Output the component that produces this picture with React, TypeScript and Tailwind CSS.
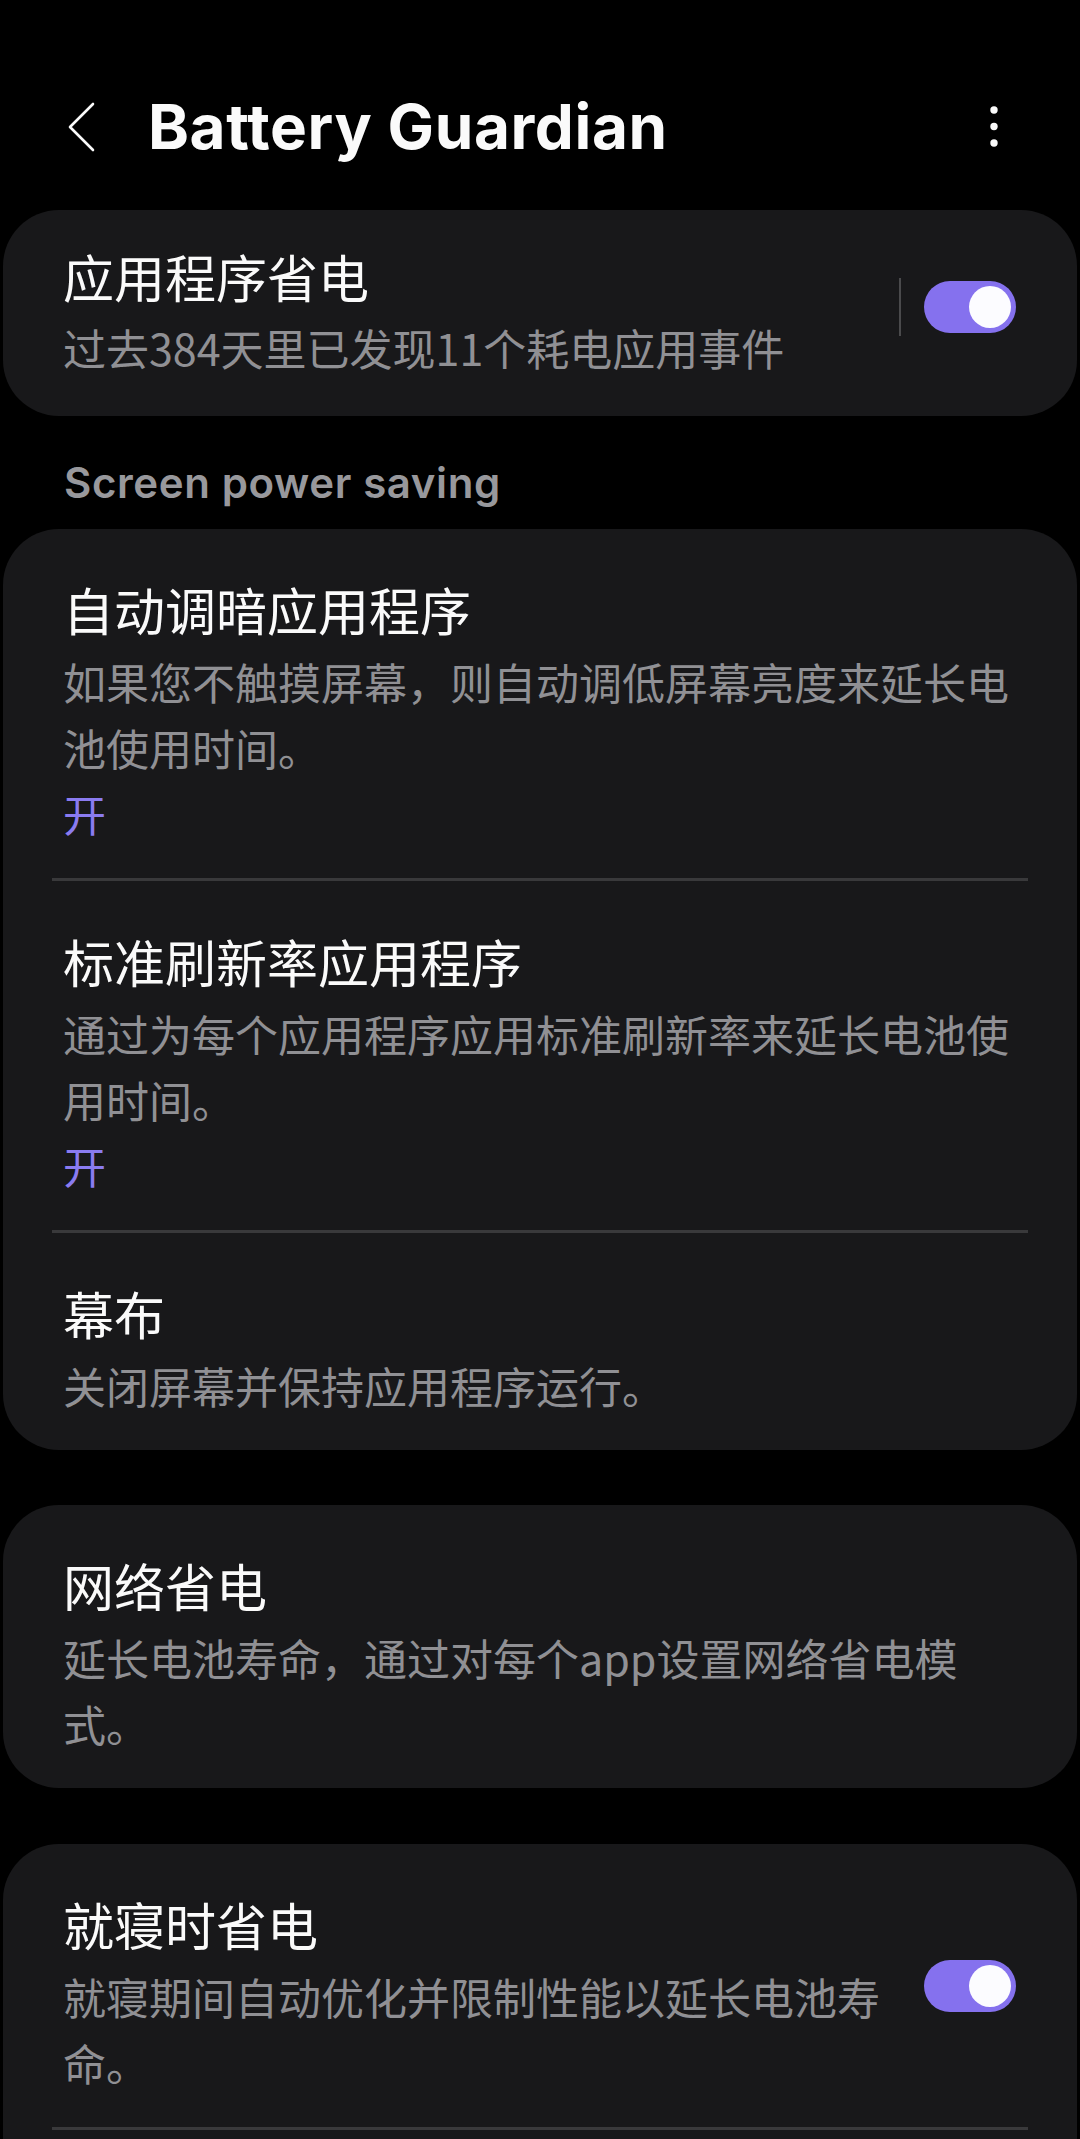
import React from "react";

const CJK = { fontFamily: '"Noto Sans CJK SC", "Noto Sans", sans-serif' };

function Toggle() {
  return (
    <div className="flex h-[52px] w-[92px] shrink-0 items-center justify-end rounded-full bg-[#8571ee] pr-[5px]">
      <div className="h-[42px] w-[42px] rounded-full bg-[#fcfcff]" />
    </div>
  );
}

function Item({ title, sub, on }: { title: string; sub: string; on?: boolean }) {
  return (
    <div className="pl-[60px] pr-[60px] pt-[47px] pb-[32px]">
      <div className="text-[51px] leading-[66px] text-[#fafafa]">{title}</div>
      <div className="mt-[6px] text-[43px] leading-[66px] text-[#909094]">{sub}</div>
      {on && <div className="text-[43px] leading-[66px] text-[#8a7bf0]">开</div>}
    </div>
  );
}

function Divider() {
  return <div className="mx-[49px] h-[3px] bg-[#39393b]" />;
}

export default function App() {
  return (
    <div className="h-[2139px] w-[1080px] overflow-hidden bg-black" style={CJK}>
      {/* Header */}
      <div className="flex h-[210px] items-center pt-[44px]">
        <svg width="30" height="50" viewBox="0 0 30 50" className="ml-[67px]">
          <polyline points="26,2 3,25 26,48" fill="none" stroke="#fafafa" strokeWidth="2.6" strokeLinecap="round" strokeLinejoin="round" />
        </svg>
        <div
          className="ml-[51px] text-[62px] font-bold leading-[80px] tracking-[0.6px] text-[#fafafa]"
          style={{ fontFamily: 'Inter, "Noto Sans", sans-serif' }}
        >
          Battery Guardian
        </div>
        <div className="flex-1" />
        <svg width="14" height="48" viewBox="0 0 14 48" className="mr-[79px]">
          <circle cx="7" cy="7" r="3.7" fill="#fafafa" />
          <circle cx="7" cy="23.5" r="3.7" fill="#fafafa" />
          <circle cx="7" cy="40" r="3.7" fill="#fafafa" />
        </svg>
      </div>

      <div className="flex flex-col px-[3px]">
        {/* Card 1 */}
        <div className="flex items-center rounded-[56px] bg-[#18181a] pl-[60px] pr-[61px]">
          <div className="flex-1 pt-[33px] pb-[36px]">
            <div className="text-[51px] leading-[66px] text-[#fafafa]">应用程序省电</div>
            <div className="mt-[5px] text-[43px] leading-[66px] text-[#909094]">过去384天里已发现11个耗电应用事件</div>
          </div>
          <div className="mb-[12px] flex items-center">
            <div className="h-[58px] w-[2px] bg-[#4a4a4c]" />
            <div className="ml-[23px]">
              <Toggle />
            </div>
          </div>
        </div>

        {/* Section header */}
        <div
          className="mt-[42px] mb-[21px] pl-[61px] text-[42px] font-semibold leading-[50px] tracking-[0.6px] text-[#98989c]"
          style={{ fontFamily: 'Inter, "Noto Sans", sans-serif' }}
        >
          Screen power saving
        </div>

        {/* Card 2 */}
        <div className="rounded-[56px] bg-[#18181a]">
          <Item title="自动调暗应用程序" sub="如果您不触摸屏幕，则自动调低屏幕亮度来延长电池使用时间。" on />
          <Divider />
          <Item title="标准刷新率应用程序" sub="通过为每个应用程序应用标准刷新率来延长电池使用时间。" on />
          <Divider />
          <Item title="幕布" sub="关闭屏幕并保持应用程序运行。" />
        </div>

        {/* Card 3 */}
        <div className="mt-[55px] rounded-[56px] bg-[#18181a]">
          <Item title="网络省电" sub="延长电池寿命，通过对每个app设置网络省电模式。" />
        </div>

        {/* Card 4 */}
        <div className="mt-[56px] rounded-[56px] bg-[#18181a]">
          <div className="flex items-center pr-[61px]">
            <div className="flex-1 pl-[60px] pr-[30px] pt-[47px] pb-[32px]">
              <div className="text-[51px] leading-[66px] text-[#fafafa]">就寝时省电</div>
              <div className="mt-[6px] text-[43px] leading-[66px] text-[#909094]">就寝期间自动优化并限制性能以延长电池寿命。</div>
            </div>
            <Toggle />
          </div>
          <Divider />
          <div className="h-[120px]" />
        </div>
      </div>
    </div>
  );
}
